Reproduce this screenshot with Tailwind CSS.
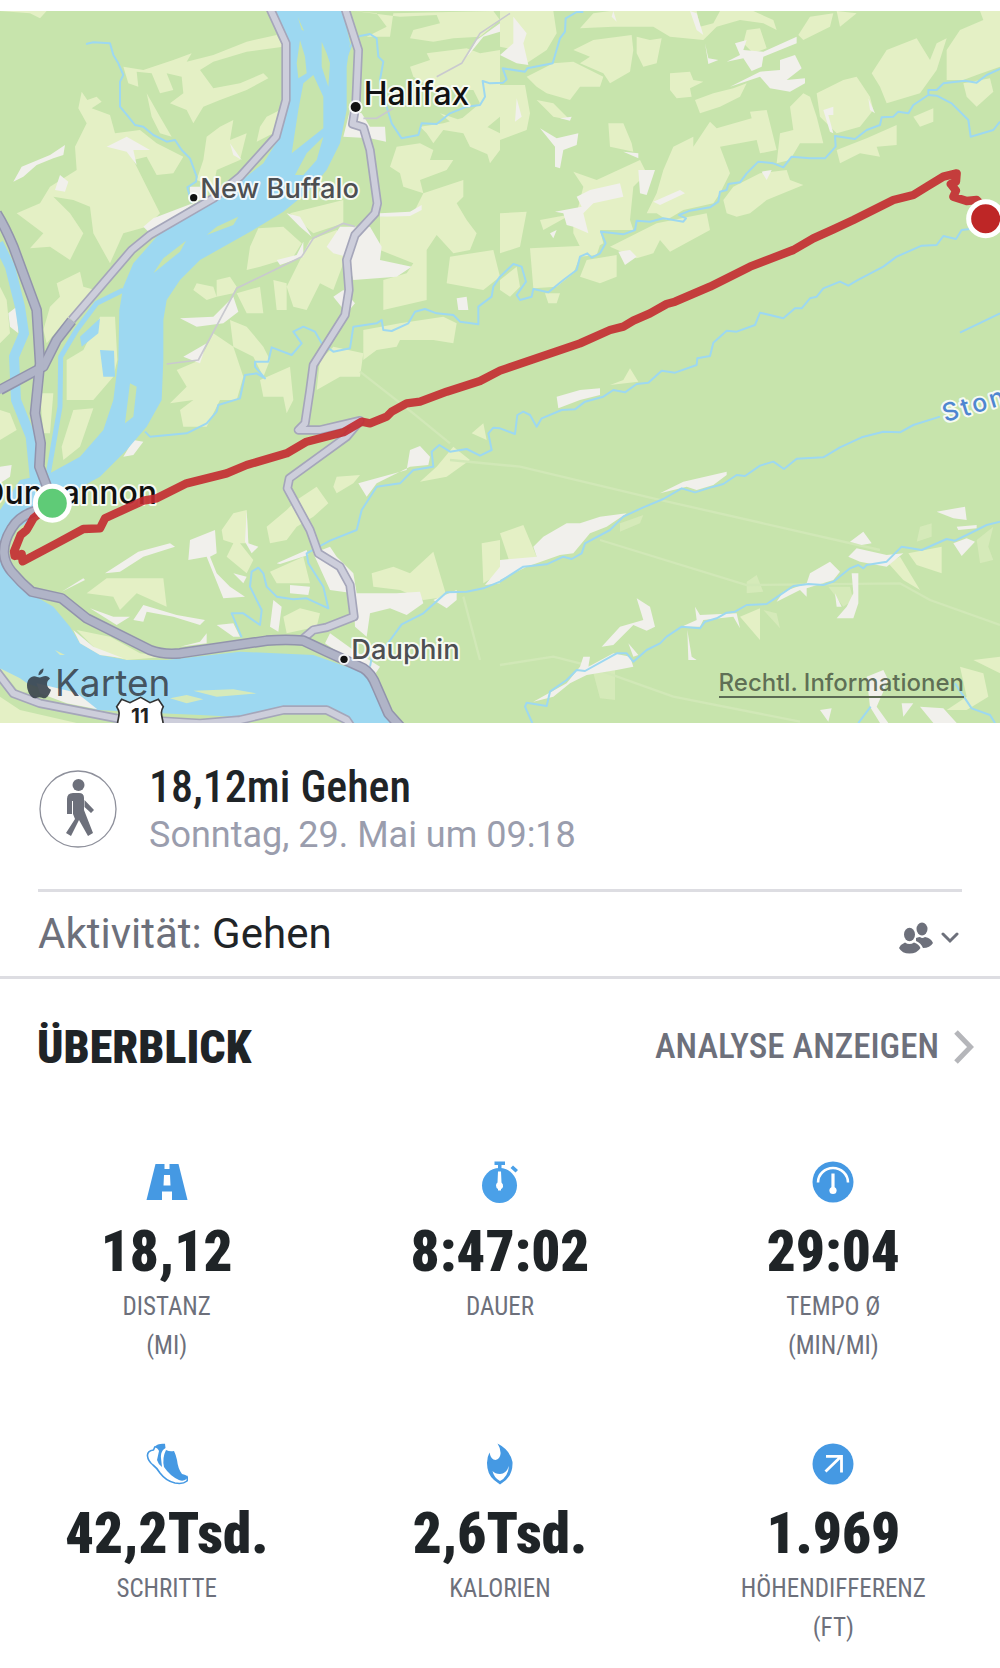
<!DOCTYPE html>
<html lang="de">
<head>
    <meta charset="UTF-8">
    <meta name="viewport" content="width=device-width, initial-scale=1.0">
    <title>18,12mi Gehen</title>
    <script src="https://cdn.jsdelivr.net/npm/@tailwindcss/browser@4"></script>
</head>
<body class="bg-white font-['Roboto_Condensed','Roboto',sans-serif] text-[#1f2427]">

    <!-- Karte -->
    <section class="relative mt-[11px]">
        <svg viewBox="0 33 3000 2136" class="block w-full bg-[#c7e4ac] font-['Inter',sans-serif]" role="img" aria-label="Karte der Strecke">
            <!-- Felder -->
            <g fill="#e4f0c5">
                <path d="M370 200L430 210L520 180L575 160L560 185L640 165L740 125L830 105L850 140L740 155L640 185L600 210L640 265L720 250L790 220L805 235L740 270L660 300L610 320L580 370L560 330L510 310L550 280L545 230L500 220L520 270L480 280L455 220L410 215L415 260L385 250Z"/>
                <path d="M245 275L262 300L290 290L305 305L275 325L330 345L345 400L420 390L470 430L550 470L520 520L470 525L440 470L400 480L440 560L480 640L440 680L370 700L330 790L280 700L270 620L220 600L160 590L210 640L250 700L210 780L150 740L90 745L130 700L50 640L120 610L150 560L230 510L225 440L260 370L235 325Z"/>
                <path d="M440 280L480 350L515 410L480 400L455 350ZM660 380L700 360L690 420L740 400L720 480L650 510L640 560L590 540L610 480L620 410ZM800 350L840 330L820 400L770 425L780 380Z"/>
                <path d="M240 815L250 860L285 870L250 920L190 970L140 1030L130 990L150 920L180 890L170 850ZM300 950L345 950L352 1080L340 1130L280 1200L200 1200L200 1080L250 1050ZM120 1180L160 1180L150 1300L130 1300ZM190 1380L185 1340L220 1230L280 1225L240 1340Z"/>
                <path d="M775 685L850 680L905 730L880 770L780 800L740 810L750 740ZM870 640L1030 600L1030 670L940 700ZM930 720L1010 690L1040 720L1030 790L1000 870L960 850L920 930L880 920L860 860L900 780ZM580 870L590 850L640 860L650 890L620 900ZM650 840L690 830L710 860L700 880L650 890ZM710 880L780 860L790 940L740 940ZM690 960L740 980L790 1040L810 1080L790 1130L760 1070L700 1040ZM820 840L860 850L860 930L830 930Z"/>
                <path d="M640 1000L700 1040L730 1130L710 1200L660 1200L620 1280L550 1280L540 1230L580 1200L510 1210L560 1160L530 1110L600 1080ZM780 1140L870 1100L880 1200L860 1240L850 1190L790 1190ZM960 1080L1000 1040L1090 1060L1080 1130L1020 1130L950 1170Z"/>
                <path d="M1060 33L1130 40L1160 80L1100 110L1170 110L1180 40L1480 33L1500 60L1440 110L1360 115L1300 125L1230 115L1240 90L1320 70L1310 45L1200 50ZM1230 200L1290 180L1280 160L1400 145L1440 160L1500 150L1500 350L1440 400L1380 390L1320 340L1380 360L1440 310L1420 270L1310 270L1240 230ZM1260 380L1330 370L1400 350L1500 400L1480 470L1410 440L1390 400L1330 390L1300 430L1280 400Z"/>
                <path d="M1190 440L1260 430L1300 450L1290 480L1360 480L1340 510L1260 540L1270 580L1210 560L1200 520L1170 500ZM1140 650L1240 640L1270 580L1390 540L1390 590L1370 610L1400 660L1430 700L1410 750L1360 760L1310 705L1280 750L1280 900L1150 930L1150 840L1220 820L1240 790L1140 750ZM1350 770L1480 750L1500 830L1450 870L1340 850ZM1090 990L1200 970L1330 950L1370 970L1360 1030L1300 1020L1200 1020L1190 1040L1130 1050L1090 1080ZM1450 420L1500 400L1500 450L1470 490Z"/>
                <path d="M0 33L140 33L120 55L90 40ZM0 1230L30 1240L50 1290L0 1320ZM0 860L20 900L30 1000L0 1030Z" />
            </g>
            <g fill="#e4f0c5" transform="translate(1500 0)">
                <path d="M0 33L160 33L170 100L140 150L80 190L50 150L0 140ZM220 150L280 120L395 105L400 150L390 215L330 250L310 220L240 190L270 170ZM410 110L450 120L485 115L470 190L430 200L410 160ZM240 85L280 40L330 33L590 33L600 80L640 70L660 33L760 33L820 60L830 90L790 70L720 60L650 80L610 120L510 110L460 80L340 80Z"/>
                <path d="M80 230L160 190L220 185L310 230L300 260L240 260L210 300L140 280L110 260ZM0 255L75 255L90 340L80 390L0 420ZM110 300L160 310L210 360L160 350ZM510 220L570 215L580 240L610 245L570 265L575 290L530 295L510 270ZM585 300L640 280L700 265L740 250L720 290L660 320L600 340ZM740 90L780 85L800 145L760 160L730 130ZM895 105L930 50L1000 40L990 80L910 120ZM1010 33L1070 40L1020 80Z"/>
                <path d="M325 370L370 370L395 430L400 455L330 440ZM490 510L520 440L580 410L580 440L630 365L650 385L755 355L750 335L800 330L830 450L780 460L770 420L660 440L690 520L660 580L640 610L550 630L500 660L470 640L440 640L470 580ZM840 400L880 390L870 320L910 280L930 290L950 350L970 430L900 430L870 480L830 490Z"/>
                <path d="M950 280L1030 240L1070 230L1110 290L1120 330L1080 380L1010 400L960 350ZM1115 220L1160 150L1250 115L1290 180L1310 130L1340 115L1310 210L1260 280L1160 310L1140 260ZM1340 150L1380 90L1450 60L1440 33L1500 33L1500 200L1430 225L1390 240L1340 240ZM1390 250L1470 235L1480 275L1430 320L1400 290ZM1240 350L1300 325L1300 365L1260 380ZM1010 450L1100 415L1190 375L1190 435L1130 440L1140 470L1080 460L1020 490Z"/>
                <path d="M220 515L290 540L420 480L440 520L400 560L390 660L400 690L300 690L310 730L260 760L240 740L220 700L220 640L130 690L120 660L230 640L250 560ZM0 640L80 635L60 740L0 760ZM90 745L300 735L290 765L240 770L220 820L170 860L100 865ZM260 780L350 765L350 830L300 850L240 830ZM670 600L700 560L780 520L860 510L870 540L910 555L800 600L750 640L710 650L680 640ZM330 740L470 670L620 640L630 690L510 755L480 720L460 760L410 775ZM0 840L50 800L60 860L30 890L0 870ZM135 880L180 880L170 910L145 910Z"/>
            </g>
            <g fill="#e4f0c5" transform="translate(0 1080)">
                <path d="M1000 380L1010 350L1080 345L1060 370L1010 400ZM1360 260L1410 300L1340 350L1260 365L1310 320ZM1415 220L1450 190L1460 240ZM890 420L950 380L985 430L940 470L890 500L860 540L810 550L800 500L860 450ZM665 510L700 460L740 450L745 550L720 550L760 600L740 640L680 590L700 550L670 540ZM260 700L320 655L490 655L500 740L410 700L360 750L340 710ZM810 635L910 590L930 670L830 670ZM850 770L900 745L960 760L950 800L860 820ZM1115 640L1180 620L1230 640L1300 575L1340 710L1270 720L1200 690L1120 680ZM1445 550L1500 540L1500 640L1450 670ZM230 810L330 830L420 880L500 890L380 900L300 880ZM0 1010L60 1050L230 1089L0 1089ZM510 1010L590 1005L610 1015L540 1030ZM600 990L740 985L770 1000L640 1005Z"/>
            </g>
            <g fill="#e4f0c5" transform="translate(1500 1080)">
                <path d="M0 520L70 495L110 590L30 610ZM330 75L370 60L390 25L415 65ZM720 770L780 745L780 840ZM1165 610L1200 590L1260 690L1210 660ZM1225 580L1325 560L1325 640L1250 615ZM1340 1050L1400 1010L1380 920L1450 940L1465 1010L1400 1050ZM1420 900L1500 890L1500 940Z"/>
                <path opacity=".5" d="M740 665L770 645L790 695L740 700ZM790 750L830 760L840 805ZM985 680L1050 680L1060 720L1030 740ZM280 940L345 930L345 1020L300 1015ZM360 490L430 465L420 490L360 515ZM1430 540L1480 500L1465 560L1480 600L1440 610ZM1250 545L1260 500L1295 490L1295 530Z"/>
            </g>
            <!-- Schneisen -->
            <g fill="none" stroke="#d1e8b7" stroke-width="7">
                <path d="M1080 1115L1240 1240L1350 1330M1350 1380L1560 1400L1960 1495L2640 1650M1800 1620L2240 1755L2700 1750L2790 1800L3000 1875M1500 1995L1660 1970L1740 1990L2020 2090L2400 2165M1390 1790L1440 1980"/>
            </g>
            <!-- Ortsflächen -->
            <g fill="#f1f0ec">
                <path d="M40 545L65 500L150 465L195 435L190 465L160 475L110 495L70 530ZM165 570L180 525L205 545L195 575ZM320 440L380 410L450 450L400 450L410 495L380 455ZM690 430L725 480L700 465ZM430 680L460 655L590 605L450 700ZM570 560L600 560L610 600L570 600ZM1050 330L1085 340L1110 380L1155 380L1158 425L1110 415L1030 410ZM1140 640L1230 635L1265 615L1265 630L1230 648L1140 650ZM980 740L1020 680L1110 680L1145 740L1140 780L1235 800L1190 830L1060 840L1040 770L1000 760ZM860 640L900 650L935 710L900 680ZM830 780L890 765L910 725L910 770L840 795ZM1000 890L1030 870L1065 910L1040 940ZM540 955L640 950L700 890L715 935L670 970L590 980ZM550 1070L620 1030L600 1090ZM1370 895L1400 890L1405 930L1375 930ZM25 940L50 920L55 1000L30 980ZM1400 170L1430 120L1500 70L1500 95L1450 110L1410 160Z"/>
            </g>
            <g fill="#f1f0ec" transform="translate(1500 0)">
                <path d="M40 50L80 100L70 130L85 195L50 190L0 165L40 130ZM50 295L65 350L45 365ZM120 385L170 415L235 400L230 435L190 450L180 505L165 500L165 440ZM180 355L215 350L210 362ZM370 455L415 460L415 475ZM415 510L465 510L440 585L420 580ZM230 590L270 570L360 550L370 590L280 610L250 640L265 700L220 680L200 675L190 640L165 635L245 620ZM150 700L170 690L160 715ZM355 755L390 750L410 770L375 795ZM460 605L540 570L555 580L480 615ZM785 515L815 510L800 540ZM615 130L625 175L655 180L625 192ZM680 185L720 165L705 130L740 120L730 150L790 155L890 110L890 130L790 170L785 200L755 213L730 175ZM690 260L780 215L840 210L840 180L885 165L905 205L860 240L915 235L915 250L870 275L810 265L780 230ZM970 330L1000 320L1000 345L985 345L1000 400L990 395ZM1105 295L1125 340L1110 330ZM570 33L590 40L610 105L590 90ZM340 33L350 65L335 50Z"/>
            </g>
            <g fill="#f1f0ec" transform="translate(0 1080)">
                <path d="M0 320L35 315L30 350L0 370ZM370 290L400 240L430 245L400 285ZM1230 270L1260 258L1290 290L1285 315L1230 320L1130 370L1100 410L1075 370L1220 330ZM565 600L570 540L645 510L650 580L630 590L650 640L690 680L735 710L670 715L620 590ZM415 575L510 550L525 560L430 590L360 635L315 640ZM740 450L745 550L775 560L755 580L735 545ZM185 695L250 655L255 660ZM700 640L740 650L730 670ZM940 580L990 560L1010 590L1060 640L1070 700L1190 700L1260 695L1270 730L1220 765L1170 745L1110 760L1100 830L1065 800L1060 700L990 690ZM830 610L920 570L925 585L840 612ZM870 675L930 680L925 705L870 700ZM810 800L820 720L845 740L835 815ZM270 745L340 770L390 770L350 795ZM400 780L430 735L530 765L615 780L600 795L520 770L440 755L430 785ZM650 795L700 790L720 830L700 830ZM540 860L600 845L620 820L620 850ZM975 850L990 820L1060 870L1140 920L1120 950ZM1300 720L1370 690L1370 720L1340 745ZM1455 675L1500 620L1500 670Z"/>
            </g>
            <g fill="#f1f0ec" transform="translate(1500 1080)">
                <path d="M170 110L240 90L300 85L300 105L240 120L175 145ZM480 400L550 365L680 335L680 345L640 375L590 390L560 380ZM0 660L0 600L110 590L100 560L130 530L200 490L240 490L300 470L380 460L320 500L270 520L220 580L180 585L80 620ZM410 715L450 740L465 800L440 812L400 795L340 855L305 860L360 800L430 780ZM100 1025L200 970L240 920L250 890L270 890L265 920L340 880L390 890L400 920L350 930L260 945L210 970L160 1010ZM385 850L415 885L400 890ZM545 800L590 780L585 740L600 765L710 760L720 805L700 770L610 780L600 800ZM562 810L575 890L590 900L565 900ZM830 725L850 695L920 670L930 640L990 605L1020 635L1000 660L920 685L920 710L900 690ZM1050 545L1090 515L1115 550L1085 555ZM1045 590L1070 565L1160 585L1210 580L1160 620L1080 605ZM1055 640L1075 640L1075 730L1060 775L1010 775L1040 740L1060 700ZM1005 700L1025 740L1010 740ZM1310 455L1395 440L1400 480L1360 475ZM1370 500L1430 495L1430 505L1375 510ZM1360 550L1400 535L1425 545L1385 588ZM1110 1040L1100 950L1150 930L1165 960L1130 1040L1165 1089L1140 1089ZM960 1050L995 1045L985 1085ZM1260 1040L1330 1045L1370 1089L1300 1089ZM1205 1030L1240 1030L1210 1070Z"/>
            </g>
            <!-- Bäche -->
            <g fill="none" stroke="#9dd8f1" stroke-width="6" stroke-linejoin="round">
                <path d="M258 132L280 127L330 130L340 165L355 190L370 225L360 245L360 320L385 350L405 375L430 380L460 405L500 425L525 420L545 450L570 475L590 530L588 545L562 562L575 610"/>
                <path d="M1040 170L1060 120L1080 108L1110 102L1130 115L1135 170L1150 185L1140 240L1160 320L1175 370L1205 415L1255 405L1265 370L1310 372L1350 340L1400 320L1440 315L1455 290L1448 243L1470 250L1510 248L1520 238L1508 205L1575 215L1582 205L1658 190L1680 115L1695 95L1697 55L1730 36L1750 36"/>
                <path d="M435 1295L450 1310L560 1300L620 1270L650 1235L655 1215L720 1195L735 1125L770 1120L795 1135L765 1100L765 1085L805 1085L815 1042L875 1065L905 1030L880 995L910 980L945 995L965 1030L1000 1055L1050 1045L1060 980L1130 970L1145 960L1150 990L1175 993L1225 970L1245 935L1275 927L1310 940L1360 945L1380 965L1435 973L1435 920L1475 890L1480 860L1500 830L1540 792L1565 800L1578 845L1550 885L1560 900L1595 890L1600 867L1645 877L1690 840L1730 810L1740 770L1762 760L1775 773L1800 760L1817 730L1803 695L1870 703L1905 690L1910 662L1950 665L1990 655L2050 665L2058 655L2037 645L2070 632L2130 622L2155 605L2160 575L2180 570L2185 552L2220 547L2240 520L2275 485L2320 490L2350 502L2375 470L2430 475L2475 475L2507 440L2505 408L2565 417L2600 390L2640 375L2645 352L2680 350L2695 335L2725 340L2740 315L2785 285L2785 270L2810 270L2830 250L2895 242L2930 248L2960 225L3000 207"/>
                <path d="M2785 285L2810 287L2855 310L2905 360L2912 410L2980 390L3000 365"/>
                <path d="M725 1912L695 1840L730 1840L780 1875L785 1830L750 1760L755 1715L775 1703L790 1720L800 1760L830 1790L880 1798L920 1795L985 1825L970 1760L925 1690L920 1660L990 1622L1070 1590L1085 1530L1130 1460L1200 1450L1240 1410L1300 1400L1295 1355L1318 1335L1350 1355L1400 1347L1440 1367L1475 1350L1465 1300L1480 1283L1500 1285L1545 1302L1552 1245L1570 1235L1590 1245L1610 1280L1625 1255L1685 1230L1725 1228L1755 1205L1810 1190L1840 1170L1875 1177L1910 1152L1945 1148L1985 1112L2025 1118L2090 1095L2092 1075L2130 1068L2140 1028L2180 992L2210 995L2265 975L2280 938L2350 955L2385 925L2405 925L2430 895L2450 890L2470 865L2520 845L2545 857L2570 842L2650 800L2690 770L2765 737L2810 735L2830 708L2868 717L2885 690L2930 685"/>
                <path d="M2880 998L3000 940M1110 2000L1115 1975L1160 1935L1205 1873L1270 1840L1340 1777L1400 1775L1450 1765L1500 1745L1570 1700L1640 1693L1690 1670L1715 1677L1745 1660L1755 1630L1830 1590L1870 1550L1930 1522L1990 1497L2045 1465L2085 1477L2140 1460L2170 1452L2210 1425L2235 1428L2280 1397L2320 1385L2352 1407L2390 1376L2470 1372L2520 1342L2585 1312L2650 1295L2700 1297L2740 1275L2820 1250"/>
                <path d="M1597 2169L1575 2120L1580 2108L1640 2118L1650 2075L1700 2040L1730 2010L1755 2013L1850 1960L1880 1960L1900 1985L1940 1950L1980 1930L2000 1910L2045 1880L2100 1885L2115 1865L2150 1855L2180 1838L2205 1835L2240 1815L2300 1812L2325 1795L2380 1758L2425 1752L2470 1755L2500 1745L2550 1705L2575 1695L2590 1705L2600 1695L2660 1685L2705 1640L2765 1650L2840 1617L2865 1622L2900 1605L2960 1575L3000 1565"/>
                <path d="M2575 2169L2612 2120M2865 2050L2915 2125L2970 2145L2985 2169" />
            </g>
            <!-- Fluss -->
            <g fill="#9dd8f1">
                <path d="M825 33L865 120L868 300L840 410L790 490L700 560L600 610L470 710L400 790L370 860L358 930L355 1080L340 1200L310 1290L240 1370L150 1420L60 1440L0 1530L0 2010L80 2050L200 2090L290 2130L480 2140L600 2145L700 2150L850 2125L990 2130L1050 2169L1200 2169L1170 2130L1100 2020L1040 2000L940 1965L720 1955L500 1980L380 1980L300 1965L240 1930L210 1880L160 1820L90 1780L20 1700L30 1600L140 1530L210 1480L300 1430L380 1350L440 1280L485 1200L490 1080L490 960L500 900L540 840L600 780L760 690L850 635L930 570L980 510L1020 430L1040 330L1040 200L1050 130L1030 33Z"/>
                <path d="M245 1040L240 1010L300 955L295 1000ZM300 1050L342 1052L345 1130L310 1130Z"/>
            </g>
            <g fill="none" stroke="#9dd8f1">
                <path stroke-width="30" d="M-5 730L30 800L60 920L72 1000L42 1070L48 1200L92 1310L105 1440"/>
                <path stroke-width="15" d="M370 870L290 910L230 990L182 1070L180 1220L145 1420"/>
            </g>
            <g fill="#c7e4ac">
                <path d="M940 225L970 290L970 385L875 460L895 330L910 250ZM970 410L950 480L910 525L885 525L920 460ZM965 125L980 160L990 190L985 260L965 200ZM460 820L490 775L558 722L540 755ZM620 705L650 680L715 650L700 675ZM900 120L915 170L920 220L895 235L890 190ZM893 50L912 92L905 90ZM390 1150L410 1160L400 1250L375 1270Z"/>
                <path fill="#d6eabb" d="M510 2095L560 2085L610 2098L560 2110ZM580 2072L700 2068L770 2080L650 2090ZM165 1950L195 1965L180 1965ZM0 2005L60 2035L110 2070L60 2080Z"/>
                <path fill="#f1f0ec" d="M110 2050L230 2078L292 2128L200 2110L120 2080ZM220 1890L280 1940L370 1975L300 1965L240 1930Z"/>
            </g>
            <!-- Straßen -->
            <g fill="none" stroke-linejoin="round">
                <path stroke="#c9c9cf" stroke-width="5" d="M500 1092L595 1080L710 865L905 770L940 715L1030 670L1065 680M1090 355L1130 355L1180 325M1310 230L1385 190L1440 100L1530 40"/>
                <g stroke="#a5a6ba" stroke-width="28">
                    <path id="s1" d="M810 25L858 130L858 300L828 410L720 530L640 595L450 705L395 750L215 960"/>
                    <path id="s2" d="M1035 25L1075 150L1068 310L1058 372L1090 382L1110 450L1132 610L1125 640L1065 705L1040 780L1047 870L1035 945L940 1095L930 1170L915 1270L895 1290L960 1290L1080 1262L1040 1310L868 1435L862 1465L930 1590L955 1660L1020 1700L1050 1755L1062 1850L980 1882L940 1890L905 1920"/>
                    <path id="s3" d="M-10 2015L40 2080L120 2110L350 2155L600 2170L720 2160L850 2130L980 2130L1040 2160L1060 2190"/>
                </g>
                <g stroke="#cdcedb" stroke-width="18">
                    <use href="#s1"/><use href="#s2"/><use href="#s3"/>
                </g>
            </g>
            <g fill="none" stroke-linejoin="round">
                <g stroke="#9294ac" stroke-width="32">
                    <path d="M215 962L170 1020L130 1100L0 1170"/>
                    <path id="h1" d="M-10 640Q15 680 40 740L110 930L120 1090L105 1240L122 1330L118 1400L160 1510L100 1535Q55 1550 35 1585Q10 1625 12 1660Q14 1690 35 1715Q65 1750 95 1775L185 1795L260 1855L450 1950Q490 1965 540 1960L800 1922Q860 1917 910 1922L980 1955L1090 2005Q1115 2020 1130 2060L1165 2140L1210 2190"/>
                </g>
                <g stroke="#b0b4c7" stroke-width="23">
                    <path d="M215 962L170 1020L130 1100L-5 1172"/>
                    <use href="#h1"/>
                </g>
            </g>
            <!-- Schild 11 -->
            <path fill="#fff" stroke="#333" stroke-width="5" d="M365 2098L390 2108L422 2092L450 2108L475 2098L490 2120C478 2140 488 2150 490 2175L352 2175C354 2150 364 2140 350 2120Z"/>
            <text x="420" y="2169" text-anchor="middle" font-size="62" font-weight="700" fill="#222">11</text>
            <!-- Orte -->
            <g stroke="#fff" stroke-opacity=".85" stroke-width="12" stroke-linejoin="round" paint-order="stroke">
                <g fill="#111" font-size="96" font-weight="500">
                    <text x="1091" y="315">Halifax</text>
                    <text x="-56" y="1512">Duncannon</text>
                </g>
                <g fill="#4d4f52" font-size="82" font-weight="500">
                    <text x="601" y="594">New Buffalo</text>
                    <text x="1054" y="1977">Dauphin</text>
                </g>
                <g fill="#111">
                    <circle cx="1067" cy="321" r="15"/>
                    <circle cx="581" cy="593" r="11"/>
                    <circle cx="1032" cy="1978" r="11"/>
                </g>
                <text transform="translate(2836 1267) rotate(-17)" font-size="75" font-weight="500" letter-spacing="9" fill="#4f86d0">Stony</text>
            </g>
            <!-- Strecke -->
            <path fill="none" stroke="#c32a30" stroke-opacity=".9" stroke-width="25" stroke-linecap="round" stroke-linejoin="round" d="M157 1510L100 1555L80 1590L62 1605L42 1655L44 1668L65 1662L68 1684L170 1630L250 1587L300 1585L315 1555L430 1502L470 1495L560 1450L680 1420L740 1395L860 1360L920 1325L1030 1297L1085 1265L1110 1270L1160 1250L1175 1235L1220 1210L1260 1205L1340 1175L1440 1143L1500 1112L1520 1105L1740 1030L1830 990L1870 980L1900 962L1950 940L2000 912L2025 905L2130 860L2250 800L2380 750L2440 715L2500 688L2560 660L2680 600L2740 585L2780 560L2830 530L2870 520L2868 545L2852 552L2868 572L2860 590L2900 603L2930 600L2950 620"/>
            <g stroke="#fff" stroke-width="15">
                <circle cx="157" cy="1510" r="51" fill="#5fcb77"/>
                <circle cx="2957" cy="656" r="51" fill="#be2626"/>
            </g>
        </svg>
        <div class="absolute bottom-[18px] left-[27px] flex items-center gap-1 font-['Inter',sans-serif] text-[37px] leading-[44px] text-[#39424c]/90">
            <svg viewBox="0 0 24 30" class="h-[31px] w-6" fill="currentColor" aria-hidden="true">
                <path d="M16.500 0C16.700 3 14.500 6.500 11.500 6.800C11.200 3.800 13.800 .6 16.500 0ZM23 10.200C18.500 13 19.300 19 24 21.200C22.800 25 20.200 29.800 17.300 29.800C15.500 29.800 14.700 28.700 12.500 28.700C10.300 28.700 9.400 29.800 7.700 29.800C4 29.800 0 22.500 0 17C0 11.200 3.500 7.700 7.200 7.700C9.500 7.700 11 9 12.700 9C14.200 9 16 7.500 18.600 7.500C20.300 7.500 22 8.500 23 10.200Z"/>
            </svg>
            <span>Karten</span>
        </div>
        <a href="#" class="absolute right-9 bottom-[25px] border-b-2 border-[#5c6b54] font-['Inter',sans-serif] text-[24px] leading-[26px] font-medium text-[#4c5a46]/85">Rechtl. Informationen</a>
    </section>

    <!-- Kopf -->
    <header class="mx-[38px] flex items-center gap-8 border-b-[3px] border-[#dddde2] pt-[38px] pb-8 pl-px">
        <svg viewBox="0 0 78 78" class="size-[78px] shrink-0" fill="#6d707b" aria-hidden="true">
            <circle cx="39" cy="39" r="38" fill="none" stroke="#8e909b" stroke-width="1.300"/>
            <circle cx="39.500" cy="15" r="6"/>
            <path d="M34 23H40Q45 23 45 28V40L54 63L49 66L40 50L32 66L27 63L36 49L34 44V31H33V44H28V29Q28 23 34 23ZM45.500 30L55 40L52 43L45.500 37Z"/>
        </svg>
        <div>
            <h1 class="text-[44px] leading-[52px] font-medium">18,12mi Gehen</h1>
            <p class="font-['Roboto',sans-serif] text-[36px] leading-[44px] text-[#9a9dad]">Sonntag, 29. Mai um 09:18</p>
        </div>
    </header>

    <div class="flex items-center justify-between border-b-[3px] border-[#dddde2] px-[38px] py-4 font-['Roboto',sans-serif]">
        <p class="text-[42px] leading-[52px]"><span class="text-[#6d707b]">Aktivität:</span> Gehen</p>
        <button type="button" aria-label="Sichtbarkeit" class="flex items-center gap-2 pt-2 pr-[3px] text-[#6d707b]">
            <svg viewBox="0 0 34 32" class="h-8 w-[34px]" fill="currentColor" aria-hidden="true">
                <ellipse cx="23" cy="7" rx="5.500" ry="6.500"/>
                <path d="M17 16Q20 15 21 15Q23 17 26 15Q32 16 34 21Q31 26 24 26Q22 21 17 19Z"/>
                <ellipse cx="10.500" cy="12.500" rx="5.500" ry="6.700"/>
                <path d="M6 20.500Q10.500 23.500 15 20.500Q20 22 21.500 26Q18 31.500 10.500 31.500Q3 31.500 0 26Q2 22 6 20.500Z"/>
            </svg>
            <svg viewBox="0 0 18 12" class="h-3 w-[18px]" fill="none" stroke="currentColor" stroke-width="3" stroke-linecap="round" aria-hidden="true"><path d="M2 2L9 9L16 2"/></svg>
        </button>
    </div>

    <!-- Überblick -->
    <div class="flex items-center justify-between pt-[38px] pr-[26px] pl-[37px]">
        <h2 class="text-[46px] leading-[60px] font-black">ÜBERBLICK</h2>
        <a href="#" class="flex items-center gap-[15px] text-[35px] leading-[60px] font-medium text-[#6d707b]">
            ANALYSE ANZEIGEN
            <svg viewBox="0 0 20 34" class="h-[34px] w-5" fill="none" stroke="#b5b6ba" stroke-width="5" aria-hidden="true"><path d="M2 2L16.500 17L2 32"/></svg>
        </a>
    </div>

    <dl class="grid grid-cols-3 gap-y-[78px] pt-[84px] text-center">
        <div class="flex flex-col items-center">
            <svg viewBox="0 0 42 42" class="size-[42px]" fill="#4599e3" aria-hidden="true"><path d="M9.500 3H18.500V8H23.500V3H32.500L41.500 39H26V30.500H16V39H.5ZM18 14L17.500 24.500H24.500L24 14Z" fill-rule="evenodd"/></svg>
            <dd class="order-2 mt-[14px] text-[57px] leading-[70px] font-black">18,12</dd>
            <dt class="order-3 text-[25px] leading-[39px] text-[#6d707b]">DISTANZ<br>(MI)</dt>
        </div>
        <div class="flex flex-col items-center">
            <svg viewBox="0 0 42 42" class="size-[42px]" fill="#4aa0e8" aria-hidden="true"><circle cx="20.500" cy="24.500" r="17.500"/><path d="M15.500 .5H26V4H22.500V8H19V4H15.500ZM34 4.500L39 9L36.500 11.500L31.500 7Z"/><path fill="#fff" d="M19 10.500H22L22.500 21.500Q24.500 23 24 26Q23 28 22 28V29.500H19V28Q17 27 17 24.500Q17 22.500 18.500 21.500Z"/></svg>
            <dd class="order-2 mt-[14px] text-[57px] leading-[70px] font-black">8:47:02</dd>
            <dt class="order-3 text-[25px] leading-[39px] text-[#6d707b]">DAUER</dt>
        </div>
        <div class="flex flex-col items-center">
            <svg viewBox="0 0 42 42" class="size-[42px]" aria-hidden="true"><circle cx="21" cy="21" r="20.500" fill="#4599e3"/><path d="M6 21.500A15 14.500 0 0 1 36 21.500" fill="none" stroke="#fff" stroke-width="2.600"/><path d="M21 12.500V30" stroke="#fff" stroke-width="3.200"/><circle cx="21" cy="29.500" r="3.600" fill="#fff"/></svg>
            <dd class="order-2 mt-[14px] text-[57px] leading-[70px] font-black">29:04</dd>
            <dt class="order-3 text-[25px] leading-[39px] text-[#6d707b]">TEMPO Ø<br>(MIN/MI)</dt>
        </div>
        <div class="flex flex-col items-center">
            <svg viewBox="0 0 42 42" class="size-[42px]" fill="#4599e3" aria-hidden="true">
                <path fill="none" stroke="#4599e3" stroke-width="1.600" stroke-linejoin="round" d="M9 3.500L7.500 7Q1 8 1.500 13Q2 18 7 22Q11 25 14 30Q20 38 29 40Q37 41.500 41 38Q42 35 40.500 33"/>
                <path d="M8 4Q12 0 19 .8L19.500 5L17 7Q14.500 10 15 15L16 24Q12 21 11 17L13 8Q12 5 8 4ZM20 7Q24 9 28 8Q30 12 31 17Q32 26 36 31Q42 32 41.500 35Q38 39 33 37Q24 33 18 24Q16 15 20 7Z"/>
            </svg>
            <dd class="order-2 mt-[14px] text-[57px] leading-[70px] font-black">42,2Tsd.</dd>
            <dt class="order-3 text-[25px] leading-[39px] text-[#6d707b]">SCHRITTE</dt>
        </div>
        <div class="flex flex-col items-center">
            <svg viewBox="0 0 42 42" class="size-[42px]" fill="#4599e3" aria-hidden="true"><path fill-rule="evenodd" d="M18.500 .5Q31 7 33.500 19Q34 30 27 37L21 41.500L15 37Q8 31 8 20Q8 14 10.500 9.500Q12 17 16.500 17Q21 16 21.500 11Q22 6 18.500 .5ZM13.500 28Q15 35 21 38Q29 34 30 23Q27 31 21 31Q16 31 13.500 28Z"/></svg>
            <dd class="order-2 mt-[14px] text-[57px] leading-[70px] font-black">2,6Tsd.</dd>
            <dt class="order-3 text-[25px] leading-[39px] text-[#6d707b]">KALORIEN</dt>
        </div>
        <div class="flex flex-col items-center">
            <svg viewBox="0 0 42 42" class="size-[42px]" aria-hidden="true"><circle cx="21" cy="21" r="20.500" fill="#4599e3"/><path d="M13.500 28.500L29 13.500M14 13.300H29.500V29.500" fill="none" stroke="#fff" stroke-width="2.800"/></svg>
            <dd class="order-2 mt-[14px] text-[57px] leading-[70px] font-black">1.969</dd>
            <dt class="order-3 text-[25px] leading-[39px] text-[#6d707b]">HÖHENDIFFERENZ<br>(FT)</dt>
        </div>
    </dl>
</body>
</html>
